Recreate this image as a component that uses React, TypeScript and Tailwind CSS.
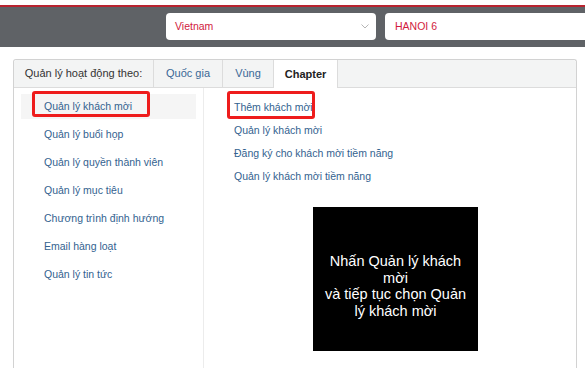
import React from 'react';

const leftItems = [
  'Quản lý khách mời',
  'Quản lý buổi họp',
  'Quản lý quyền thành viên',
  'Quản lý mục tiêu',
  'Chương trình định hướng',
  'Email hàng loạt',
  'Quản lý tin tức',
];

const rightItems = [
  'Thêm khách mời',
  'Quản lý khách mời',
  'Đăng ký cho khách mời tiềm năng',
  'Quản lý khách mời tiềm năng',
];

function Chevron() {
  return (
    <svg width="8" height="5" viewBox="0 0 8 5" fill="none">
      <path d="M0.5 0.5 L4 4 L7.5 0.5" stroke="#b5b5b5" strokeWidth="1" />
    </svg>
  );
}

export default function App() {
  return (
    <div className="w-[585px] h-[377px] overflow-hidden bg-white font-['Liberation_Sans',Arial,sans-serif]">
      {/* Top bar */}
      <div className="h-[5px] bg-white" />
      <div className="h-[2px] bg-[#b8232f]" />
      <div className="h-[40px] bg-[#5f6266] flex items-start pt-[6px] overflow-hidden">
        <div className="shrink-0 ml-[166px] w-[210px] h-[27px] bg-white rounded-[4px] flex items-center justify-between pl-[9px] pr-[7px]">
          <span className="text-[10.5px] text-[#d11a3d]">Vietnam</span>
          <Chevron />
        </div>
        <div className="shrink-0 ml-[9px] w-[220px] h-[27px] bg-white rounded-l-[4px] flex items-center pl-[10px]">
          <span className="text-[10.5px] text-[#d11a3d]">HANOI 6</span>
        </div>
      </div>

      {/* Card */}
      <div className="mt-[12px] ml-[13px] w-[564px] h-[309px] border border-b-0 border-[#d2d2d2] rounded-t-[3px] flex flex-col">
        <div className="h-[28px] bg-[#f3f4f4] border-b border-[#dcdcdc] flex text-[11px] rounded-t-[3px]">
          <div className="w-[140px] border-r border-[#dcdcdc] flex items-center justify-center text-[#333]">
            Quản lý hoạt động theo:
          </div>
          <div className="w-[69px] border-r border-[#dcdcdc] flex items-center justify-center text-[#3a6896]">
            Quốc gia
          </div>
          <div className="w-[51px] border-r border-[#dcdcdc] flex items-center justify-center text-[#3a6896]">
            Vùng
          </div>
          <div className="w-[64px] h-[28px] border-r border-[#dcdcdc] bg-white flex items-center justify-center text-[#222] font-semibold">
            Chapter
          </div>
        </div>

        <div className="flex flex-1">
          {/* Left column */}
          <div className="w-[190px] border-r border-[#ececec] pt-[6px] px-[7px] flex flex-col gap-[3px]">
            {leftItems.map((item, i) => (
              <div
                key={item}
                className={`relative h-[25px] flex items-center pl-[23px] text-[10.5px] text-[#33628f] ${i === 0 ? 'bg-[#f5f5f5]' : ''}`}
              >
                {item}
                {i === 0 && (
                  <div className="absolute left-[11px] top-[-3px] w-[118px] h-[26px] border-[3px] border-[#ee1c1c] rounded-[3px]" />
                )}
              </div>
            ))}
          </div>

          {/* Right column */}
          <div className="flex-1 pt-[8px] pl-[30px] flex flex-col">
            {rightItems.map((item, i) => (
              <div key={item} className="relative h-[23px] flex items-center text-[10.5px] text-[#33628f]">
                <span className="relative">
                  {item}
                  {i === 0 && (
                    <span className="absolute left-[-7px] top-[-9px] w-[88px] h-[28px] border-[3px] border-[#ee1c1c] rounded-[3px]" />
                  )}
                </span>
              </div>
            ))}

            <div className="ml-[79px] mt-[19px] w-[165px] h-[144px] bg-black flex flex-col items-center pt-[46px] text-white text-[14.5px] leading-[16.5px] text-center">
              <span>Nhấn Quản lý khách</span>
              <span>mời</span>
              <span>và tiếp tục chọn Quản</span>
              <span>lý khách mời</span>
            </div>
          </div>
        </div>
      </div>
    </div>
  );
}
